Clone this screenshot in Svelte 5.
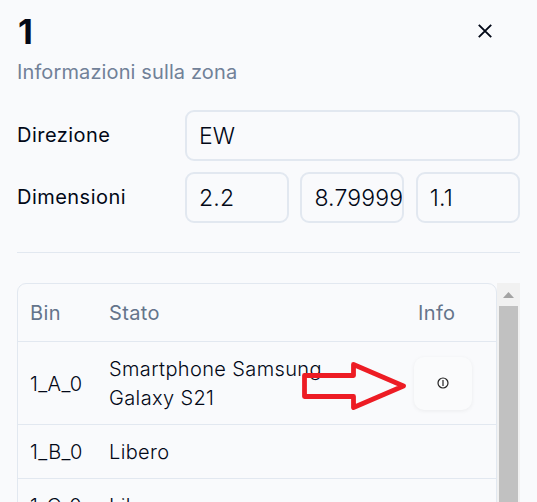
<script>
  const dimensions = ['2.2', '8.79999', '1.1'];
  const bins = [
    { id: '1_A_0', state: 'Smartphone Samsung Galaxy S21', info: true },
    { id: '1_B_0', state: 'Libero', info: false },
    { id: '1_C_0', state: 'Libero', info: false }
  ];
</script>

<main>
  <header>
    <div>
      <h1>1</h1>
      <p>Informazioni sulla zona</p>
    </div>
    <button class="close" aria-label="Chiudi">
      <svg width="14" height="14" viewBox="0 0 14 14" fill="none" stroke="#020817" stroke-width="1.9"><path d="M.8.8l12.4 12.4M13.2.8.8 13.2" /></svg>
    </button>
  </header>

  <section class="fields">
    <span class="label">Direzione</span>
    <div class="field wide">EW</div>
    <span class="label">Dimensioni</span>
    <div class="dims">
      {#each dimensions as value}
        <div class="field">{value}</div>
      {/each}
    </div>
  </section>

  <section class="list">
    <div class="table">
      <div class="row head">
        <span>Bin</span><span>Stato</span><span class="infohead">Info</span>
      </div>
      {#each bins as bin}
        <div class="row" class:tall={bin.info}>
          <span>{bin.id}</span>
          <span>{bin.state}</span>
          {#if bin.info}
            <button class="info" aria-label="Info">
              <svg width="12" height="12" viewBox="0 0 12 12" fill="none" stroke="#222" stroke-width="1.2"><circle cx="6" cy="6" r="5" /><path d="M6 3.1V9" /></svg>
            </button>
          {/if}
        </div>
      {/each}
    </div>
    <div class="scrollbar">
      <svg width="23" height="23" viewBox="0 0 23 23"><path d="M6 15l5.5-6 5.5 6z" fill="#a3a3a3" /></svg>
      <div class="thumb"></div>
    </div>
  </section>

  <svg class="arrow" width="108" height="52" viewBox="0 0 108 52" fill="none" stroke="#ed1c24" stroke-width="4.8" stroke-linejoin="round">
    <path d="M4.5 15.5H53.5V4.5L103.5 26 53.5 47.5V36.5H4.5z" />
  </svg>
</main>

<style>
  :global(body) { background: #f9fafc; overflow: hidden; }
  main {
    position: relative;
    box-sizing: border-box;
    width: 537px;
    height: 502px;
    padding: 10px 17px 0;
    overflow: hidden;
    background: #f9fafc;
    color: #020817;
    font: 300 20px/28px Inter, sans-serif;
    letter-spacing: 0.37px;
  }
  header { display: flex; justify-content: space-between; height: 100px; }
  h1 { margin: 0; padding-left: 1px; font-size: 34.5px; line-height: 43px; font-weight: 700; }
  p { margin: 5px 0 0; color: #718198; font-weight: 400; letter-spacing: 0.12px; }
  button { padding: 0; border: 0; background: none; display: flex; align-items: center; justify-content: center; }
  .close { width: 24px; height: 24px; margin: 9px 23px 0 0; }
  .fields {
    display: grid;
    grid-template-columns: 168px 335px;
    grid-template-rows: 51px 51px;
    row-gap: 11px;
    align-items: center;
    box-sizing: border-box;
    height: 143px;
    border-bottom: 1px solid #e2e8f0;
  }
  .label { font-weight: 400; padding-bottom: 2px; letter-spacing: 0.47px; }
  .field {
    box-sizing: border-box;
    height: 51px;
    border: 2px solid #e2e8f0;
    border-radius: 9px;
    padding: 1px 12px 0;
    font-size: 23px;
    line-height: 47px;
    letter-spacing: 0.15px;
    overflow: hidden;
    white-space: nowrap;
  }
  .dims { display: grid; grid-template-columns: repeat(3, 104px); column-gap: 11.4px; }
  .list { display: flex; margin-top: 30px; width: 503px; height: 219px; }
  .table {
    box-sizing: border-box;
    width: 480px;
    height: 240px;
    border: 1px solid #e2e8f0;
    border-radius: 9px 9px 0 0;
  }
  .row {
    box-sizing: border-box;
    display: grid;
    grid-template-columns: 79px 305px 1fr;
    align-items: center;
    height: 54px;
    padding-left: 12px;
    border-bottom: 1px solid #e2e8f0;
    line-height: 29px;
  }
  .row > span { padding-top: 2px; }
  .row > span:nth-child(2) { width: 240px; }
  .row.tall { height: 83px; }
  .row.head { height: 58px; color: #64748b; font-weight: 400; }
  .row .infohead { padding-left: 4px; }
  .info {
    width: 58px;
    height: 53px;
    border-radius: 10px;
    background: #fafbfc;
    box-shadow: 0 1px 4px rgba(0, 0, 0, 0.06);
  }
  .scrollbar { width: 23px; height: 219px; background: #f1f1f1; }
  .scrollbar svg { display: block; }
  .thumb { width: 19px; height: 196px; margin: 0 2px; background: #c1c1c1; }
  .arrow { position: absolute; left: 300px; top: 360px; }
</style>
